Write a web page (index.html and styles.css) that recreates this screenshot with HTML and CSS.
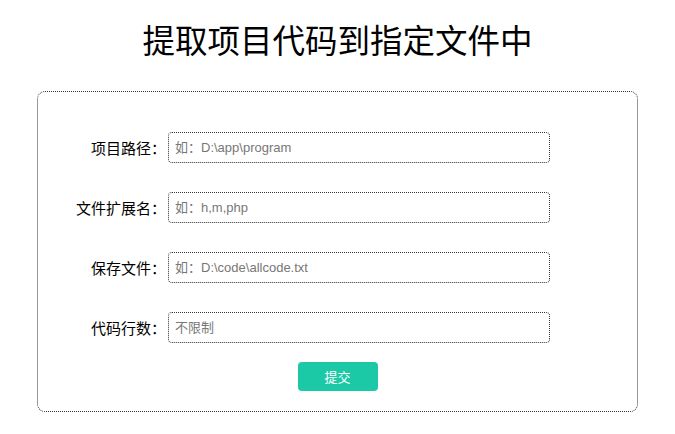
FILE: index.html
```html
<!DOCTYPE html>
<html lang="zh">
<head>
<meta charset="utf-8">
<title>提取项目代码到指定文件中</title>
<link rel="stylesheet" href="styles.css">
</head>
<body>
<h1 class="title">提取项目代码到指定文件中</h1>
<form class="panel">
  <div class="row">
    <label class="label">项目路径：</label>
    <input class="field" type="text" placeholder="如：D:\app\program">
  </div>
  <div class="row">
    <label class="label">文件扩展名：</label>
    <input class="field" type="text" placeholder="如：h,m,php">
  </div>
  <div class="row">
    <label class="label">保存文件：</label>
    <input class="field" type="text" placeholder="如：D:\code\allcode.txt">
  </div>
  <div class="row">
    <label class="label">代码行数：</label>
    <input class="field" type="text" placeholder="不限制">
  </div>
  <div class="actions">
    <button class="submit" type="button">提交</button>
  </div>
</form>
</body>
</html>
```
FILE: styles.css
```css
html, body {
  margin: 0;
  padding: 0;
  background: #fff;
}
body {
  font-family: "Liberation Sans", "Noto Sans CJK SC", sans-serif;
  color: #000;
}
.title {
  margin: 22px 0 0;
  height: 69px;
  font-family: "Liberation Serif", "Noto Sans CJK SC", serif;
  font-weight: normal;
  font-size: 32.5px;
  line-height: 40px;
  text-align: center;
}
.panel {
  box-sizing: border-box;
  width: 601px;
  height: 321px;
  margin: 0 auto;
  border: 1px dotted #333;
  border-radius: 8px;
  padding: 40px 0 0;
  display: flex;
  flex-direction: column;
  gap: 29px;
}
.row {
  display: flex;
  align-items: center;
  height: 31px;
}
.label {
  width: 128px;
  margin-right: 2px;
  text-align: right;
  font-size: 15px;
  font-family: "Noto Sans CJK SC", sans-serif;
}
.field {
  box-sizing: border-box;
  width: 382px;
  height: 31px;
  border: 1px dotted #333;
  border-radius: 4px;
  padding: 0 6px;
  font-size: 13px;
  font-family: "Liberation Sans", "Noto Sans CJK SC", sans-serif;
  outline: none;
}
.field::placeholder {
  color: #777;
}
.actions {
  display: flex;
  justify-content: center;
  margin-top: -10px;
}
.submit {
  width: 80px;
  height: 29px;
  border: none;
  border-radius: 4px;
  background: #1bc9a7;
  color: #fff;
  font-size: 13px;
  font-family: "Noto Sans CJK SC", sans-serif;
  padding: 0;
}
```
